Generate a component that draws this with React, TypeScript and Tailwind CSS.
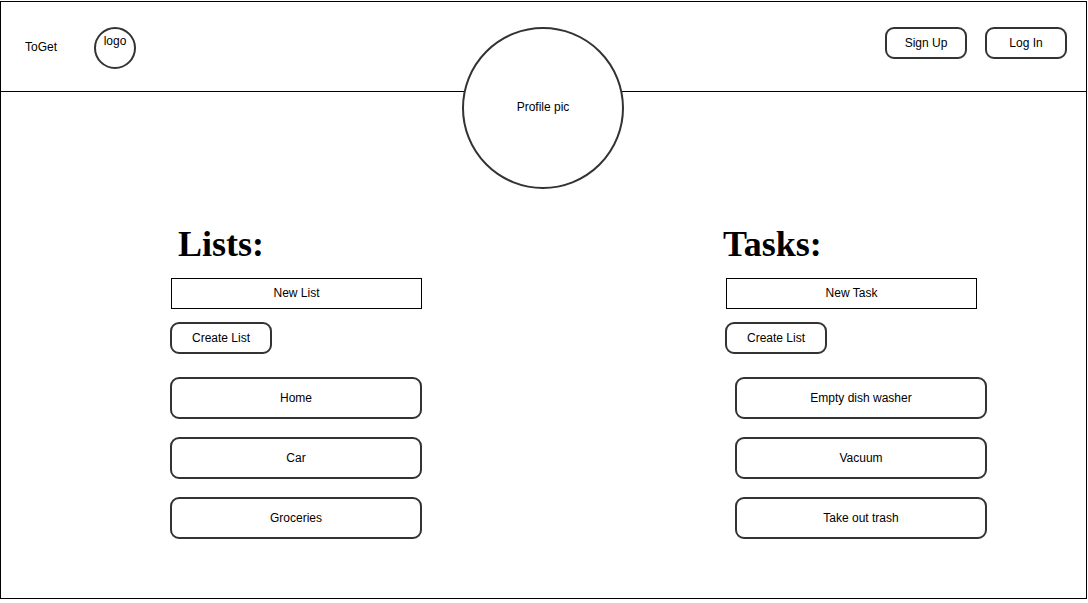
const lists = ['Home', 'Car', 'Groceries'];
const tasks = ['Empty dish washer', 'Vacuum', 'Take out trash'];

function RoundButton({ label, className = '' }: { label: string; className?: string }) {
  return (
    <div
      className={`flex items-center justify-center rounded-[9px] border-2 border-[#333333] bg-white text-[12px] text-black ${className}`}
    >
      {label}
    </div>
  );
}

function Column({
  title,
  placeholder,
  items,
  headingShift,
  itemShift,
}: {
  title: string;
  placeholder: string;
  items: string[];
  headingShift: string;
  itemShift: string;
}) {
  return (
    <div className="flex w-[251px] flex-col">
      <h2
        className={`h-[36px] text-[36px] font-bold leading-none text-black ${headingShift}`}
        style={{ fontFamily: '"Liberation Serif", "Times New Roman", serif' }}
      >
        {title}
      </h2>
      <div className="mt-[16px] flex h-[31px] w-[251px] items-center justify-center border border-black pb-px text-[12px] text-black">
        {placeholder}
      </div>
      <RoundButton label="Create List" className="-ml-px mt-[13px] h-[32px] w-[102px]" />
      <div className={`mt-[23px] flex flex-col gap-[18px] ${itemShift}`}>
        {items.map((item) => (
          <RoundButton key={item} label={item} className="h-[42px] w-[252px]" />
        ))}
      </div>
    </div>
  );
}

export default function App() {
  return (
    <div
      className="min-h-[603px] bg-white pt-px"
      style={{ fontFamily: '"Liberation Sans", Arial, sans-serif' }}
    >
      <div className="relative h-[598px] w-[1087px] border border-black">
        {/* Header */}
        <header className="flex h-[90px] items-start border-b border-black">
          <span className="ml-[24px] mt-[36px] text-[12px] text-black">ToGet</span>
          <div className="ml-[37px] mt-[25px] flex h-[42px] w-[42px] justify-center rounded-full border-2 border-[#333333] pt-[6px] text-[12px] leading-none text-black">
            logo
          </div>
          <div className="ml-auto mr-[19px] mt-[25px] flex gap-[18px]">
            <RoundButton label="Sign Up" className="h-[32px] w-[82px]" />
            <RoundButton label="Log In" className="h-[32px] w-[82px]" />
          </div>
        </header>

        {/* Profile picture overlapping the header line */}
        <div className="absolute left-[461px] top-[25px] flex h-[162px] w-[162px] items-center justify-center rounded-full border-2 border-[#333333] bg-white pb-[2px] text-[12px] text-black">
          Profile pic
        </div>

        {/* Lists and tasks */}
        <main className="ml-[170px] mt-[134px] flex gap-[304px]">
          <Column title="Lists:" placeholder="New List" items={lists} headingShift="ml-[7px]" itemShift="-ml-px" />
          <Column title="Tasks:" placeholder="New Task" items={tasks} headingShift="-ml-[3px]" itemShift="ml-[9px]" />
        </main>
      </div>
    </div>
  );
}
